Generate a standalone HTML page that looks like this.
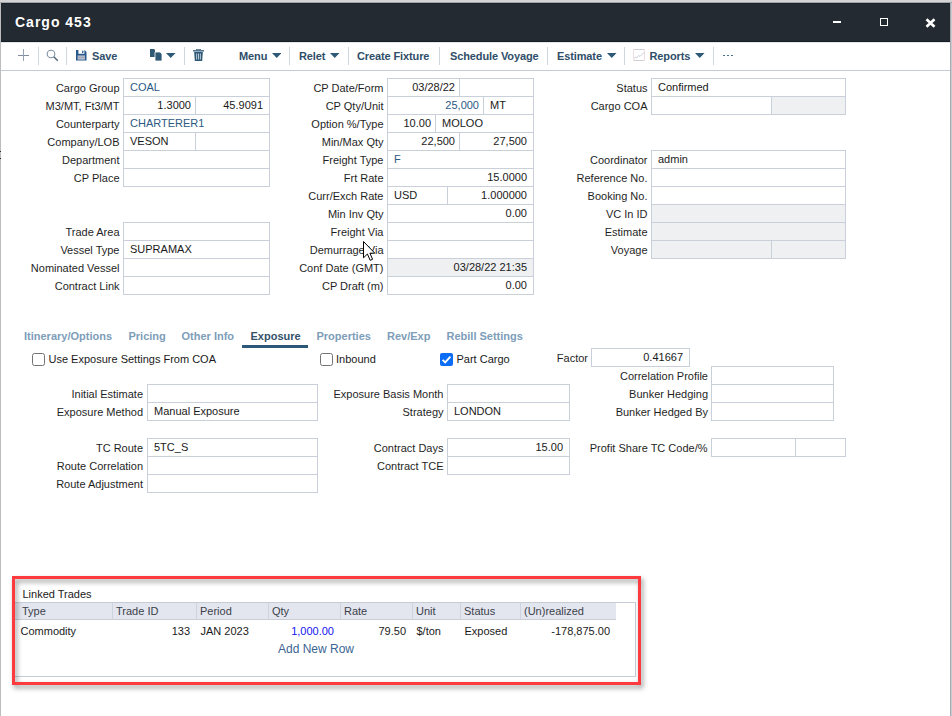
<!DOCTYPE html><html><head><meta charset="utf-8"><style>
html,body{margin:0;padding:0;}
body{width:952px;height:716px;overflow:hidden;position:relative;background:#fff;font-family:"Liberation Sans", sans-serif;}
.t{position:absolute;white-space:nowrap;line-height:20px;}
div{position:absolute}
</style></head><body>
<div style="position:absolute;left:0px;top:0px;width:952px;height:2px;background:#d4d4d6"></div>
<div style="position:absolute;left:0px;top:2px;width:952px;height:1px;background:#a3a6aa"></div>
<div style="position:absolute;left:0px;top:3px;width:1px;height:713px;background:#bdbdc0"></div>
<div style="position:absolute;left:950px;top:3px;width:1px;height:713px;background:#a9abb3"></div>
<div style="position:absolute;left:0px;top:151px;width:1px;height:1px;background:#2a2a2a"></div>
<div style="position:absolute;left:0px;top:158px;width:1px;height:1px;background:#2a2a2a"></div>
<div style="position:absolute;left:951px;top:3px;width:1px;height:713px;background:#c9cad0"></div>
<div style="position:absolute;left:1px;top:3px;width:949px;height:39px;background:#232a31"></div>
<div style="position:absolute;left:1px;top:3px;width:949px;height:1px;background:#1b2329"></div>
<div style="position:absolute;left:1px;top:41px;width:949px;height:1px;background:#161d23"></div>
<div style="position:absolute;left:1px;top:42px;width:949px;height:1px;background:#e4e6e8"></div>
<div class="t" style="left:15px;top:12.00px;font-size:14px;color:#fff;font-weight:bold;letter-spacing:1px">Cargo 453</div>
<div style="position:absolute;left:833px;top:21px;width:8px;height:2px;background:#fff"></div>
<div style="position:absolute;left:880px;top:18px;width:8px;height:8px;box-sizing:border-box;border:1.3px solid #fff"></div>
<svg style="position:absolute;left:925px;top:18px" width="11" height="10" viewBox="0 0 11 10"><path d="M1.5 1.2 L9.5 8.8 M9.5 1.2 L1.5 8.8" stroke="#fff" stroke-width="2.6" stroke-linecap="butt"/></svg>
<div style="position:absolute;left:1px;top:70px;width:949px;height:1px;background:#c3cbd4"></div>
<div style="position:absolute;left:38px;top:47px;width:1px;height:18px;background:#d0d6dd"></div>
<div style="position:absolute;left:66px;top:47px;width:1px;height:18px;background:#d0d6dd"></div>
<div style="position:absolute;left:184px;top:47px;width:1px;height:18px;background:#d0d6dd"></div>
<div style="position:absolute;left:289px;top:47px;width:1px;height:18px;background:#d0d6dd"></div>
<div style="position:absolute;left:348px;top:47px;width:1px;height:18px;background:#d0d6dd"></div>
<div style="position:absolute;left:439px;top:47px;width:1px;height:18px;background:#d0d6dd"></div>
<div style="position:absolute;left:547px;top:47px;width:1px;height:18px;background:#d0d6dd"></div>
<div style="position:absolute;left:624px;top:47px;width:1px;height:18px;background:#d0d6dd"></div>
<div style="position:absolute;left:713px;top:47px;width:1px;height:18px;background:#d0d6dd"></div>
<div style="position:absolute;left:18px;top:55px;width:11px;height:1px;background:#7f8c9a"></div>
<div style="position:absolute;left:23px;top:49px;width:1px;height:12px;background:#97a3af"></div>
<svg style="position:absolute;left:46px;top:49px" width="13" height="13" viewBox="0 0 13 13"><circle cx="5" cy="5" r="3.8" fill="none" stroke="#7f90a2" stroke-width="1.1"/><path d="M7.8 7.8 L11.8 11.8" stroke="#51677c" stroke-width="1.5"/></svg>
<svg style="position:absolute;left:75.5px;top:50px" width="11" height="11" viewBox="0 0 11 11"><path d="M0 0 H8.6 L10.5 1.9 V10.6 H0 Z" fill="#28588a"/><rect x="2.4" y="0" width="6" height="3.8" fill="#fff"/><rect x="6.1" y="0.7" width="1.3" height="2.4" fill="#28588a"/><rect x="1.6" y="5.4" width="7.4" height="4.3" fill="#b6bccb"/><rect x="1.6" y="6.9" width="7.4" height="0.6" fill="#8e98ad"/></svg>
<div class="t" style="left:92px;top:46.00px;font-size:11px;color:#2f4e69;font-weight:bold;letter-spacing:-0.12px">Save</div>
<svg style="position:absolute;left:150px;top:49px" width="13" height="12" viewBox="0 0 13 12"><path d="M0 0 H4 L5 1 V8 H0 Z" fill="#2d5876"/><path d="M5 3 H10 L12 5 V12 H5 Z" fill="#2d5876" stroke="#fff" stroke-width="0.8"/></svg>
<svg style="position:absolute;left:166px;top:53px" width="9.5" height="5" viewBox="0 0 9.5 5"><path d="M0 0 H9.5 L4.75 5 Z" fill="#2d5876"/></svg>
<svg style="position:absolute;left:193px;top:49px" width="11" height="12" viewBox="0 0 11 12"><rect x="0" y="1.2" width="11" height="1.3" fill="#2d5876"/><path d="M3.5 1.2 V0.3 H7.5 V1.2" fill="none" stroke="#2d5876" stroke-width="0.9"/><path d="M1.2 3 H9.8 L9.2 12 H1.8 Z" fill="#2d5876"/><rect x="3.2" y="4.5" width="0.9" height="6" fill="#c8d3dc"/><rect x="5.05" y="4.5" width="0.9" height="6" fill="#c8d3dc"/><rect x="6.9" y="4.5" width="0.9" height="6" fill="#c8d3dc"/></svg>
<div class="t" style="left:239px;top:46.00px;font-size:11px;color:#2f4e69;font-weight:bold;letter-spacing:-0.12px">Menu</div>
<svg style="position:absolute;left:271.5px;top:53px" width="9.5" height="5" viewBox="0 0 9.5 5"><path d="M0 0 H9.5 L4.75 5 Z" fill="#2d5876"/></svg>
<div class="t" style="left:299px;top:46.00px;font-size:11px;color:#2f4e69;font-weight:bold;letter-spacing:-0.12px">Relet</div>
<svg style="position:absolute;left:330px;top:53px" width="9.5" height="5" viewBox="0 0 9.5 5"><path d="M0 0 H9.5 L4.75 5 Z" fill="#2d5876"/></svg>
<div class="t" style="left:357px;top:46.00px;font-size:11px;color:#2f4e69;font-weight:bold;letter-spacing:-0.12px">Create Fixture</div>
<div class="t" style="left:450px;top:46.00px;font-size:11px;color:#2f4e69;font-weight:bold;letter-spacing:-0.12px">Schedule Voyage</div>
<div class="t" style="left:557px;top:46.00px;font-size:11px;color:#2f4e69;font-weight:bold;letter-spacing:-0.12px">Estimate</div>
<svg style="position:absolute;left:607px;top:53px" width="9.5" height="5" viewBox="0 0 9.5 5"><path d="M0 0 H9.5 L4.75 5 Z" fill="#2d5876"/></svg>
<svg style="position:absolute;left:633px;top:49px" width="13" height="13" viewBox="0 0 13 13"><path d="M0.5 0.5 H11.5 M0.5 11.5 H11.5" stroke="#cfcfd8" stroke-width="1"/><path d="M0.5 0.5 V11.5 M11.5 0.5 V11.5" stroke="#f0dde2" stroke-width="1"/><path d="M1 9.5 L2.5 8.2 L4 8.8 L5.5 6.6 L7 7.4 L8.2 6.2 L11.3 3.2" fill="none" stroke="#c6cad8" stroke-width="0.9"/></svg>
<div class="t" style="left:649.5px;top:46.00px;font-size:11px;color:#2f4e69;font-weight:bold;letter-spacing:-0.12px">Reports</div>
<svg style="position:absolute;left:695px;top:53px" width="9.5" height="5" viewBox="0 0 9.5 5"><path d="M0 0 H9.5 L4.75 5 Z" fill="#2d5876"/></svg>
<div style="position:absolute;left:723px;top:54.5px;width:1.6px;height:1.6px;background:#2d5876;opacity:0.85"></div>
<div style="position:absolute;left:727px;top:54.5px;width:1.6px;height:1.6px;background:#2d5876;opacity:0.85"></div>
<div style="position:absolute;left:731px;top:54.5px;width:1.6px;height:1.6px;background:#2d5876;opacity:0.85"></div>
<div class="t" style="right:832.5px;top:78.00px;font-size:11px;color:#1f1f1f;font-weight:normal;">Cargo Group</div>
<div style="position:absolute;left:123px;top:78px;width:147px;height:19px;box-sizing:border-box;border:1px solid #c9d0d9;background:#fff"></div>
<div class="t" style="left:130px;top:77.00px;font-size:11px;color:#2d5a83;font-weight:normal;">COAL</div>
<div class="t" style="right:832.5px;top:96.00px;font-size:11px;color:#1f1f1f;font-weight:normal;">M3/MT, Ft3/MT</div>
<div style="position:absolute;left:123px;top:96px;width:73px;height:19px;box-sizing:border-box;border:1px solid #c9d0d9;background:#fff"></div>
<div style="position:absolute;left:195px;top:96px;width:75px;height:19px;box-sizing:border-box;border:1px solid #c9d0d9;background:#fff"></div>
<div class="t" style="right:761px;top:95.00px;font-size:11px;color:#1a1a1a;font-weight:normal;">1.3000</div>
<div class="t" style="right:689px;top:95.00px;font-size:11px;color:#1a1a1a;font-weight:normal;">45.9091</div>
<div class="t" style="right:832.5px;top:114.00px;font-size:11px;color:#1f1f1f;font-weight:normal;">Counterparty</div>
<div style="position:absolute;left:123px;top:114px;width:147px;height:19px;box-sizing:border-box;border:1px solid #c9d0d9;background:#fff"></div>
<div class="t" style="left:130px;top:113.00px;font-size:11px;color:#2d5a83;font-weight:normal;">CHARTERER1</div>
<div class="t" style="right:832.5px;top:132.00px;font-size:11px;color:#1f1f1f;font-weight:normal;">Company/LOB</div>
<div style="position:absolute;left:123px;top:132px;width:73px;height:19px;box-sizing:border-box;border:1px solid #c9d0d9;background:#fff"></div>
<div style="position:absolute;left:195px;top:132px;width:75px;height:19px;box-sizing:border-box;border:1px solid #c9d0d9;background:#fff"></div>
<div class="t" style="left:130px;top:131.00px;font-size:11px;color:#1a1a1a;font-weight:normal;">VESON</div>
<div class="t" style="right:832.5px;top:150.00px;font-size:11px;color:#1f1f1f;font-weight:normal;">Department</div>
<div style="position:absolute;left:123px;top:150px;width:147px;height:19px;box-sizing:border-box;border:1px solid #c9d0d9;background:#fff"></div>
<div class="t" style="right:832.5px;top:168.00px;font-size:11px;color:#1f1f1f;font-weight:normal;">CP Place</div>
<div style="position:absolute;left:123px;top:168px;width:147px;height:19px;box-sizing:border-box;border:1px solid #c9d0d9;background:#fff"></div>
<div class="t" style="right:832.5px;top:222.00px;font-size:11px;color:#1f1f1f;font-weight:normal;">Trade Area</div>
<div style="position:absolute;left:123px;top:222px;width:147px;height:19px;box-sizing:border-box;border:1px solid #c9d0d9;background:#fff"></div>
<div class="t" style="right:832.5px;top:240.00px;font-size:11px;color:#1f1f1f;font-weight:normal;">Vessel Type</div>
<div style="position:absolute;left:123px;top:240px;width:147px;height:19px;box-sizing:border-box;border:1px solid #c9d0d9;background:#fff"></div>
<div class="t" style="left:130px;top:239.00px;font-size:11px;color:#1a1a1a;font-weight:normal;">SUPRAMAX</div>
<div class="t" style="right:832.5px;top:258.00px;font-size:11px;color:#1f1f1f;font-weight:normal;">Nominated Vessel</div>
<div style="position:absolute;left:123px;top:258px;width:147px;height:19px;box-sizing:border-box;border:1px solid #c9d0d9;background:#fff"></div>
<div class="t" style="right:832.5px;top:276.00px;font-size:11px;color:#1f1f1f;font-weight:normal;">Contract Link</div>
<div style="position:absolute;left:123px;top:276px;width:147px;height:19px;box-sizing:border-box;border:1px solid #c9d0d9;background:#fff"></div>
<div class="t" style="right:568.5px;top:78.00px;font-size:11px;color:#1f1f1f;font-weight:normal;">CP Date/Form</div>
<div style="position:absolute;left:387px;top:78px;width:73px;height:19px;box-sizing:border-box;border:1px solid #c9d0d9;background:#fff"></div>
<div style="position:absolute;left:459px;top:78px;width:75px;height:19px;box-sizing:border-box;border:1px solid #c9d0d9;background:#fff"></div>
<div class="t" style="right:497px;top:77.00px;font-size:11px;color:#1a1a1a;font-weight:normal;">03/28/22</div>
<div class="t" style="right:568.5px;top:96.00px;font-size:11px;color:#1f1f1f;font-weight:normal;">CP Qty/Unit</div>
<div style="position:absolute;left:387px;top:96px;width:97px;height:19px;box-sizing:border-box;border:1px solid #c9d0d9;background:#fff"></div>
<div style="position:absolute;left:483px;top:96px;width:51px;height:19px;box-sizing:border-box;border:1px solid #c9d0d9;background:#fff"></div>
<div class="t" style="right:473px;top:95.00px;font-size:11px;color:#2d5a83;font-weight:normal;">25,000</div>
<div class="t" style="left:490px;top:95.00px;font-size:11px;color:#1a1a1a;font-weight:normal;">MT</div>
<div class="t" style="right:568.5px;top:114.00px;font-size:11px;color:#1f1f1f;font-weight:normal;">Option %/Type</div>
<div style="position:absolute;left:387px;top:114px;width:49px;height:19px;box-sizing:border-box;border:1px solid #c9d0d9;background:#fff"></div>
<div style="position:absolute;left:435px;top:114px;width:99px;height:19px;box-sizing:border-box;border:1px solid #c9d0d9;background:#fff"></div>
<div class="t" style="right:521px;top:113.00px;font-size:11px;color:#1a1a1a;font-weight:normal;">10.00</div>
<div class="t" style="left:442px;top:113.00px;font-size:11px;color:#1a1a1a;font-weight:normal;">MOLOO</div>
<div class="t" style="right:568.5px;top:132.00px;font-size:11px;color:#1f1f1f;font-weight:normal;">Min/Max Qty</div>
<div style="position:absolute;left:387px;top:132px;width:73px;height:19px;box-sizing:border-box;border:1px solid #c9d0d9;background:#fff"></div>
<div style="position:absolute;left:459px;top:132px;width:75px;height:19px;box-sizing:border-box;border:1px solid #c9d0d9;background:#fff"></div>
<div class="t" style="right:497px;top:131.00px;font-size:11px;color:#1a1a1a;font-weight:normal;">22,500</div>
<div class="t" style="right:425px;top:131.00px;font-size:11px;color:#1a1a1a;font-weight:normal;">27,500</div>
<div class="t" style="right:568.5px;top:150.00px;font-size:11px;color:#1f1f1f;font-weight:normal;">Freight Type</div>
<div style="position:absolute;left:387px;top:150px;width:147px;height:19px;box-sizing:border-box;border:1px solid #c9d0d9;background:#fff"></div>
<div class="t" style="left:394px;top:149.00px;font-size:11px;color:#2d5a83;font-weight:normal;">F</div>
<div class="t" style="right:568.5px;top:168.00px;font-size:11px;color:#1f1f1f;font-weight:normal;">Frt Rate</div>
<div style="position:absolute;left:387px;top:168px;width:147px;height:19px;box-sizing:border-box;border:1px solid #c9d0d9;background:#fff"></div>
<div class="t" style="right:425px;top:167.00px;font-size:11px;color:#1a1a1a;font-weight:normal;">15.0000</div>
<div class="t" style="right:568.5px;top:186.00px;font-size:11px;color:#1f1f1f;font-weight:normal;">Curr/Exch Rate</div>
<div style="position:absolute;left:387px;top:186px;width:61px;height:19px;box-sizing:border-box;border:1px solid #c9d0d9;background:#fff"></div>
<div style="position:absolute;left:447px;top:186px;width:87px;height:19px;box-sizing:border-box;border:1px solid #c9d0d9;background:#fff"></div>
<div class="t" style="left:394px;top:185.00px;font-size:11px;color:#1a1a1a;font-weight:normal;">USD</div>
<div class="t" style="right:425px;top:185.00px;font-size:11px;color:#1a1a1a;font-weight:normal;">1.000000</div>
<div class="t" style="right:568.5px;top:204.00px;font-size:11px;color:#1f1f1f;font-weight:normal;">Min Inv Qty</div>
<div style="position:absolute;left:387px;top:204px;width:147px;height:19px;box-sizing:border-box;border:1px solid #c9d0d9;background:#fff"></div>
<div class="t" style="right:425px;top:203.00px;font-size:11px;color:#1a1a1a;font-weight:normal;">0.00</div>
<div class="t" style="right:568.5px;top:222.00px;font-size:11px;color:#1f1f1f;font-weight:normal;">Freight Via</div>
<div style="position:absolute;left:387px;top:222px;width:147px;height:19px;box-sizing:border-box;border:1px solid #c9d0d9;background:#fff"></div>
<div class="t" style="right:568.5px;top:240.00px;font-size:11px;color:#1f1f1f;font-weight:normal;">Demurrage Via</div>
<div style="position:absolute;left:387px;top:240px;width:147px;height:19px;box-sizing:border-box;border:1px solid #c9d0d9;background:#fff"></div>
<div class="t" style="right:568.5px;top:258.00px;font-size:11px;color:#1f1f1f;font-weight:normal;">Conf Date (GMT)</div>
<div style="position:absolute;left:387px;top:258px;width:147px;height:19px;box-sizing:border-box;border:1px solid #c9d0d9;background:#eef0f2"></div>
<div class="t" style="right:425px;top:257.00px;font-size:11px;color:#1a1a1a;font-weight:normal;">03/28/22 21:35</div>
<div class="t" style="right:568.5px;top:276.00px;font-size:11px;color:#1f1f1f;font-weight:normal;">CP Draft (m)</div>
<div style="position:absolute;left:387px;top:276px;width:147px;height:19px;box-sizing:border-box;border:1px solid #c9d0d9;background:#fff"></div>
<div class="t" style="right:425px;top:275.00px;font-size:11px;color:#1a1a1a;font-weight:normal;">0.00</div>
<div class="t" style="right:304.5px;top:78.00px;font-size:11px;color:#1f1f1f;font-weight:normal;">Status</div>
<div style="position:absolute;left:651px;top:78px;width:195px;height:19px;box-sizing:border-box;border:1px solid #c9d0d9;background:#fff"></div>
<div class="t" style="left:658px;top:77.00px;font-size:11px;color:#1a1a1a;font-weight:normal;">Confirmed</div>
<div class="t" style="right:304.5px;top:96.00px;font-size:11px;color:#1f1f1f;font-weight:normal;">Cargo COA</div>
<div style="position:absolute;left:651px;top:96px;width:121px;height:19px;box-sizing:border-box;border:1px solid #c9d0d9;background:#fff"></div>
<div style="position:absolute;left:771px;top:96px;width:75px;height:19px;box-sizing:border-box;border:1px solid #c9d0d9;background:#eef0f2"></div>
<div class="t" style="right:304.5px;top:150.00px;font-size:11px;color:#1f1f1f;font-weight:normal;">Coordinator</div>
<div style="position:absolute;left:651px;top:150px;width:195px;height:19px;box-sizing:border-box;border:1px solid #c9d0d9;background:#fff"></div>
<div class="t" style="left:658px;top:149.00px;font-size:11px;color:#1a1a1a;font-weight:normal;">admin</div>
<div class="t" style="right:304.5px;top:168.00px;font-size:11px;color:#1f1f1f;font-weight:normal;">Reference No.</div>
<div style="position:absolute;left:651px;top:168px;width:195px;height:19px;box-sizing:border-box;border:1px solid #c9d0d9;background:#fff"></div>
<div class="t" style="right:304.5px;top:186.00px;font-size:11px;color:#1f1f1f;font-weight:normal;">Booking No.</div>
<div style="position:absolute;left:651px;top:186px;width:195px;height:19px;box-sizing:border-box;border:1px solid #c9d0d9;background:#fff"></div>
<div class="t" style="right:304.5px;top:204.00px;font-size:11px;color:#1f1f1f;font-weight:normal;">VC In ID</div>
<div style="position:absolute;left:651px;top:204px;width:195px;height:19px;box-sizing:border-box;border:1px solid #c9d0d9;background:#eef0f2"></div>
<div class="t" style="right:304.5px;top:222.00px;font-size:11px;color:#1f1f1f;font-weight:normal;">Estimate</div>
<div style="position:absolute;left:651px;top:222px;width:195px;height:19px;box-sizing:border-box;border:1px solid #c9d0d9;background:#eef0f2"></div>
<div class="t" style="right:304.5px;top:240.00px;font-size:11px;color:#1f1f1f;font-weight:normal;">Voyage</div>
<div style="position:absolute;left:651px;top:240px;width:121px;height:19px;box-sizing:border-box;border:1px solid #c9d0d9;background:#eef0f2"></div>
<div style="position:absolute;left:771px;top:240px;width:75px;height:19px;box-sizing:border-box;border:1px solid #c9d0d9;background:#eef0f2"></div>
<div class="t" style="left:24px;top:326.00px;font-size:11px;color:#7d9db9;font-weight:bold;">Itinerary/Options</div>
<div class="t" style="left:128.5px;top:326.00px;font-size:11px;color:#7d9db9;font-weight:bold;">Pricing</div>
<div class="t" style="left:181.5px;top:326.00px;font-size:11px;color:#7d9db9;font-weight:bold;">Other Info</div>
<div class="t" style="left:250.5px;top:326.00px;font-size:11px;color:#34526a;font-weight:bold;">Exposure</div>
<div class="t" style="left:316.5px;top:326.00px;font-size:11px;color:#7d9db9;font-weight:bold;">Properties</div>
<div class="t" style="left:387px;top:326.00px;font-size:11px;color:#7d9db9;font-weight:bold;">Rev/Exp</div>
<div class="t" style="left:446.5px;top:326.00px;font-size:11px;color:#7d9db9;font-weight:bold;">Rebill Settings</div>
<div style="position:absolute;left:242px;top:345px;width:66px;height:3px;background:#2b5878"></div>
<svg style="position:absolute;left:32px;top:353px" width="13" height="13" viewBox="0 0 13 13"><rect x="0.5" y="0.5" width="12" height="12" rx="2" fill="#fff" stroke="#737373" stroke-width="1"/></svg>
<div class="t" style="left:48.5px;top:349.00px;font-size:11px;color:#1a1a1a;font-weight:normal;">Use Exposure Settings From COA</div>
<svg style="position:absolute;left:320px;top:353px" width="13" height="13" viewBox="0 0 13 13"><rect x="0.5" y="0.5" width="12" height="12" rx="2" fill="#fff" stroke="#737373" stroke-width="1"/></svg>
<div class="t" style="left:336px;top:349.00px;font-size:11px;color:#1a1a1a;font-weight:normal;">Inbound</div>
<svg style="position:absolute;left:440px;top:353px" width="13" height="13" viewBox="0 0 13 13"><rect x="0" y="0" width="13" height="13" rx="2" fill="#0b6cf5"/><path d="M2.6 6.8 L5.2 9.4 L10.4 3.6" fill="none" stroke="#fff" stroke-width="1.9"/></svg>
<div class="t" style="left:456.5px;top:349.00px;font-size:11px;color:#1a1a1a;font-weight:normal;">Part Cargo</div>
<div class="t" style="right:364px;top:348.00px;font-size:11px;color:#1f1f1f;font-weight:normal;">Factor</div>
<div style="position:absolute;left:591px;top:348px;width:99px;height:19px;box-sizing:border-box;border:1px solid #c9d0d9;background:#fff"></div>
<div class="t" style="right:269px;top:347.00px;font-size:11px;color:#1a1a1a;font-weight:normal;">0.41667</div>
<div class="t" style="right:244px;top:366.00px;font-size:11px;color:#1f1f1f;font-weight:normal;">Correlation Profile</div>
<div style="position:absolute;left:711px;top:366px;width:123px;height:19px;box-sizing:border-box;border:1px solid #c9d0d9;background:#fff"></div>
<div class="t" style="right:244px;top:384.00px;font-size:11px;color:#1f1f1f;font-weight:normal;">Bunker Hedging</div>
<div style="position:absolute;left:711px;top:384px;width:123px;height:19px;box-sizing:border-box;border:1px solid #c9d0d9;background:#fff"></div>
<div class="t" style="right:244px;top:402.00px;font-size:11px;color:#1f1f1f;font-weight:normal;">Bunker Hedged By</div>
<div style="position:absolute;left:711px;top:402px;width:123px;height:19px;box-sizing:border-box;border:1px solid #c9d0d9;background:#fff"></div>
<div class="t" style="right:809px;top:384.00px;font-size:11px;color:#1f1f1f;font-weight:normal;">Initial Estimate</div>
<div style="position:absolute;left:147px;top:384px;width:171px;height:19px;box-sizing:border-box;border:1px solid #c9d0d9;background:#fff"></div>
<div class="t" style="right:809px;top:402.00px;font-size:11px;color:#1f1f1f;font-weight:normal;">Exposure Method</div>
<div style="position:absolute;left:147px;top:402px;width:171px;height:19px;box-sizing:border-box;border:1px solid #c9d0d9;background:#fff"></div>
<div class="t" style="left:154px;top:401.00px;font-size:11px;color:#1a1a1a;font-weight:normal;">Manual Exposure</div>
<div class="t" style="right:508.5px;top:384.00px;font-size:11px;color:#1f1f1f;font-weight:normal;">Exposure Basis Month</div>
<div style="position:absolute;left:447px;top:384px;width:123px;height:19px;box-sizing:border-box;border:1px solid #c9d0d9;background:#fff"></div>
<div class="t" style="right:508.5px;top:402.00px;font-size:11px;color:#1f1f1f;font-weight:normal;">Strategy</div>
<div style="position:absolute;left:447px;top:402px;width:123px;height:19px;box-sizing:border-box;border:1px solid #c9d0d9;background:#fff"></div>
<div class="t" style="left:454px;top:401.00px;font-size:11px;color:#1a1a1a;font-weight:normal;">LONDON</div>
<div class="t" style="right:809px;top:438.00px;font-size:11px;color:#1f1f1f;font-weight:normal;">TC Route</div>
<div style="position:absolute;left:147px;top:438px;width:171px;height:19px;box-sizing:border-box;border:1px solid #c9d0d9;background:#fff"></div>
<div class="t" style="left:154px;top:437.00px;font-size:11px;color:#1a1a1a;font-weight:normal;">5TC_S</div>
<div class="t" style="right:809px;top:456.00px;font-size:11px;color:#1f1f1f;font-weight:normal;">Route Correlation</div>
<div style="position:absolute;left:147px;top:456px;width:171px;height:19px;box-sizing:border-box;border:1px solid #c9d0d9;background:#fff"></div>
<div class="t" style="right:809px;top:474.00px;font-size:11px;color:#1f1f1f;font-weight:normal;">Route Adjustment</div>
<div style="position:absolute;left:147px;top:474px;width:171px;height:19px;box-sizing:border-box;border:1px solid #c9d0d9;background:#fff"></div>
<div class="t" style="right:508.5px;top:438.00px;font-size:11px;color:#1f1f1f;font-weight:normal;">Contract Days</div>
<div style="position:absolute;left:447px;top:438px;width:123px;height:19px;box-sizing:border-box;border:1px solid #c9d0d9;background:#fff"></div>
<div class="t" style="right:389px;top:437.00px;font-size:11px;color:#1a1a1a;font-weight:normal;">15.00</div>
<div class="t" style="right:508.5px;top:456.00px;font-size:11px;color:#1f1f1f;font-weight:normal;">Contract TCE</div>
<div style="position:absolute;left:447px;top:456px;width:123px;height:19px;box-sizing:border-box;border:1px solid #c9d0d9;background:#fff"></div>
<div class="t" style="right:244.5px;top:438.00px;font-size:11px;color:#1f1f1f;font-weight:normal;">Profit Share TC Code/%</div>
<div style="position:absolute;left:711px;top:438px;width:85px;height:19px;box-sizing:border-box;border:1px solid #c9d0d9;background:#fff"></div>
<div style="position:absolute;left:795px;top:438px;width:51px;height:19px;box-sizing:border-box;border:1px solid #c9d0d9;background:#fff"></div>
<div style="position:absolute;left:15px;top:579px;width:623px;height:103px;background:#fff"></div>
<div class="t" style="left:22.5px;top:584.00px;font-size:11px;color:#1a1a1a;font-weight:normal;">Linked Trades</div>
<div style="position:absolute;left:14px;top:602px;width:622px;height:75px;box-sizing:border-box;border:1px solid #c6ccd6;background:#fff"></div>
<div style="position:absolute;left:15px;top:603px;width:601px;height:17px;background:#e4e6ef;border-bottom:1px solid #c9cdd8;box-sizing:border-box"></div>
<div style="position:absolute;left:112px;top:603px;width:1px;height:17px;background:#cfd3de"></div>
<div style="position:absolute;left:196px;top:603px;width:1px;height:17px;background:#cfd3de"></div>
<div style="position:absolute;left:268px;top:603px;width:1px;height:17px;background:#cfd3de"></div>
<div style="position:absolute;left:340px;top:603px;width:1px;height:17px;background:#cfd3de"></div>
<div style="position:absolute;left:412px;top:603px;width:1px;height:17px;background:#cfd3de"></div>
<div style="position:absolute;left:460px;top:603px;width:1px;height:17px;background:#cfd3de"></div>
<div style="position:absolute;left:520px;top:603px;width:1px;height:17px;background:#cfd3de"></div>
<div class="t" style="left:22px;top:601.00px;font-size:11px;color:#3a3f4a;font-weight:normal;">Type</div>
<div class="t" style="left:116px;top:601.00px;font-size:11px;color:#3a3f4a;font-weight:normal;">Trade ID</div>
<div class="t" style="left:200px;top:601.00px;font-size:11px;color:#3a3f4a;font-weight:normal;">Period</div>
<div class="t" style="left:272px;top:601.00px;font-size:11px;color:#3a3f4a;font-weight:normal;">Qty</div>
<div class="t" style="left:344px;top:601.00px;font-size:11px;color:#3a3f4a;font-weight:normal;">Rate</div>
<div class="t" style="left:416px;top:601.00px;font-size:11px;color:#3a3f4a;font-weight:normal;">Unit</div>
<div class="t" style="left:464px;top:601.00px;font-size:11px;color:#3a3f4a;font-weight:normal;">Status</div>
<div class="t" style="left:524px;top:601.00px;font-size:11px;color:#3a3f4a;font-weight:normal;">(Un)realized</div>
<div class="t" style="left:20.5px;top:621.00px;font-size:11px;color:#1a1a1a;font-weight:normal;">Commodity</div>
<div class="t" style="right:762px;top:621.00px;font-size:11px;color:#1a1a1a;font-weight:normal;">133</div>
<div class="t" style="left:200.5px;top:621.00px;font-size:11px;color:#1a1a1a;font-weight:normal;">JAN 2023</div>
<div class="t" style="right:618px;top:621.00px;font-size:11px;color:#1414f0;font-weight:normal;">1,000.00</div>
<div class="t" style="right:546px;top:621.00px;font-size:11px;color:#1a1a1a;font-weight:normal;">79.50</div>
<div class="t" style="left:416.5px;top:621.00px;font-size:11px;color:#1a1a1a;font-weight:normal;">$/ton</div>
<div class="t" style="left:464.5px;top:621.00px;font-size:11px;color:#1a1a1a;font-weight:normal;">Exposed</div>
<div class="t" style="right:342px;top:621.00px;font-size:11px;color:#1a1a1a;font-weight:normal;">-178,875.00</div>
<div class="t" style="left:116px;width:400px;text-align:center;top:639.00px;font-size:12px;color:#3b6592;font-weight:normal;">Add New Row</div>
<div style="position:absolute;left:12px;top:576px;width:629px;height:109px;box-sizing:border-box;border:3px solid #fd3a3d;filter:drop-shadow(2px 3.5px 2.5px rgba(0,0,0,0.42))"></div>
<svg style="position:absolute;left:363px;top:241px" width="13" height="21" viewBox="0 0 13 21"><path d="M0.5 0.5 L0.5 16.8 L4.4 13 L7.2 19.3 L9.6 18.3 L6.9 12.2 L11.8 12.2 Z" fill="#fff" stroke="#000" stroke-width="1" stroke-linejoin="miter"/></svg>
</body></html>
